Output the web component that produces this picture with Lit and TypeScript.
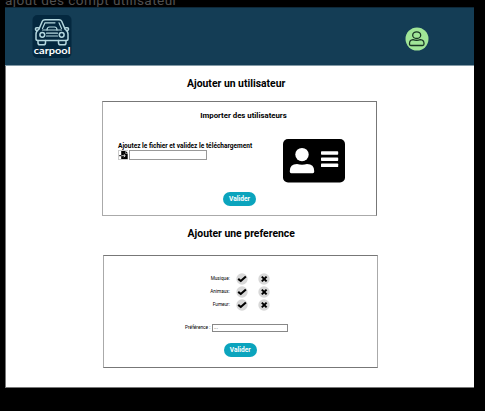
import { LitElement, html, css, svg } from "lit";
import { customElement } from "lit/decorators.js";

const preferences = ["Musique:", "Animaux:", "Fumeur:"];

const logo = html`<svg class="logo" viewBox="0 0 40 43">
  <rect x="0.5" y="0" width="39" height="43" rx="5" fill="#04283f" />
  <g fill="none" stroke="#b5d8df" stroke-width="1.5" stroke-linejoin="round" stroke-linecap="round">
    <path d="M7 14 L10.3 6.3 Q11 4.8 13 4.8 H27 Q29 4.8 29.7 6.3 L33 14" />
    <path d="M10.5 13.5 L13 7.8 H23 M27 7.8 L29.5 13.5 M10.5 15 H29.5" stroke-width="1.2" />
    <path d="M7 14 Q4 16 4 19 V24 Q4 25.5 6 25.5 H34 Q36 25.5 36 24 V19 Q36 16 33 14" />
    <path d="M6.3 12.7 H4.8 Q3.4 12.7 3.4 14 T4.9 15.7 H5.7 M33.7 12.7 H35.2 Q36.6 12.7 36.6 14 T35.1 15.7 H34.3" />
    <circle cx="10.3" cy="19.8" r="2.4" />
    <circle cx="29.7" cy="19.8" r="2.4" />
    <path d="M14.5 18.2 H25.5 M14.5 21 H25.5 M15 15 Q15 12 17.5 12 H22.5 Q25 12 25 15" stroke-width="1.2" />
    <path d="M6 25.5 V28 Q6 29.8 8 29.8 H11.5 Q13.5 29.8 13.5 28 V25.5 M26.5 25.5 V28 Q26.5 29.8 28.5 29.8 H32 Q34 29.8 34 28 V25.5" />
  </g>
  <text x="1.8" y="39.2" textLength="36.6" lengthAdjust="spacingAndGlyphs" fill="#fff">carpool</text>
</svg>`;

const avatar = html`<svg class="avatar" viewBox="0 0 24 24">
  <circle cx="12" cy="12" r="11.5" fill="#a0e597" />
  <g fill="none" stroke="#183524" stroke-width="1.3">
    <ellipse cx="11.7" cy="8.2" rx="4" ry="3.3" />
    <path d="M8 12.7 Q11.7 14.2 15.4 12.7 Q19 13 19 16.5 V17 Q19 18.5 17.5 18.5 H6 Q4.5 18.5 4.5 17 V16.5 Q4.5 13 8 12.7 Z" />
  </g>
</svg>`;

const card = html`<svg class="card" viewBox="0 0 62 43.5">
  <rect width="62" height="43.5" rx="5" />
  <g fill="#fff">
    <circle cx="19" cy="15.6" r="6.7" />
    <path d="M14 25 Q19 26.5 24 25 Q31.2 25.2 31.2 32 V32.8 Q31.2 34.2 29.8 34.2 H8.2 Q6.8 34.2 6.8 32.8 V32 Q6.8 25.2 14 25 Z" />
    <rect x="38" y="12.2" width="17.2" height="3.5" rx="0.7" />
    <rect x="38" y="18.4" width="17.2" height="3.5" rx="0.7" />
    <rect x="38" y="24.6" width="17.2" height="3.5" rx="0.7" />
  </g>
</svg>`;

const fileIcon = html`<svg class="file" viewBox="0 0 9 8">
  <path d="M2.2 0 H6.3 V2.4 H8.7 V8 H2.2 Z M6.7 0 L8.7 2.1 H6.7 Z" />
  <path d="M2.4 4.7 H6 M4.8 3.3 L6.3 4.7 L4.8 6.1" fill="none" stroke="#fff" stroke-width="0.8" />
  <path d="M0.2 4.7 H2.2" stroke="#000" stroke-width="1" />
</svg>`;

const mark = (shape: unknown) => html`<svg class="mark" viewBox="0 0 12 12">
  <circle cx="6" cy="6" r="5.7" fill="#d8d8d8" />
  ${shape}
</svg>`;
const check = svg`<path d="M2.2 5.9 L4.8 8 L9.9 3.5" fill="none" stroke="#000" stroke-width="2.1" />`;
const cross = svg`<path d="M3.8 3.6 L8.6 8.4 M8.6 3.6 L3.8 8.4" fill="none" stroke="#000" stroke-width="2" />`;

@customElement("app-root")
export class AppRoot extends LitElement {
  static styles = css`
    :host {
      display: block;
      height: 411px;
      overflow: hidden;
      background: #000;
      color: #000;
      font-family: Roboto, sans-serif;
    }
    * { box-sizing: border-box; }
    svg { display: block; flex: none; }
    .caption {
      height: 7px;
      padding-left: 5px;
      display: flex;
      align-items: flex-end;
      font-size: 13.6px;
      line-height: 14px;
      letter-spacing: 0.42px;
      color: #505050;
      white-space: nowrap;
    }
    .caption span { margin-bottom: 0; }
    .frame {
      width: 469px;
      height: 381px;
      margin-left: 5px;
      background: #fff;
      border: solid #777;
      border-width: 0 0 1px 1px;
    }
    header {
      position: relative;
      height: 59px;
      margin-left: -1px;
      padding: 8px 45.5px 0 27px;
      display: flex;
      justify-content: space-between;
      background: #143d55;
      border: 1px solid #0e293a;
      border-width: 1px 0;
      border-bottom-color: #839aa6;
    }
    .logo { width: 40px; height: 43px; margin-top: -1px; }
    .logo text { font: 700 9.8px Lato, sans-serif; }
    .avatar { width: 24px; height: 24px; margin-top: 10.5px; }
    main { display: flex; flex-direction: column; }
    h1, h2 { margin: 0; font-weight: 700; white-space: nowrap; }
    h1 { height: 14px; line-height: 14px; font-size: 10.4px; }
    .first { margin: 11px 0 10px 181px; }
    .second { margin: 11px 0 14px 181.6px; }
    h2 { font-size: 7.8px; line-height: 10px; text-align: center; }
    section {
      width: 275px;
      border: 1px solid #777;
      border-left-color: #aaa;
      display: flex;
      flex-direction: column;
    }
    .import { height: 115px; margin-left: 96px; padding: 9px 0 0 15px; border-bottom-color: #aaa; }
    .import h2 { margin-left: -7px; }
    .prefs { height: 113px; margin-left: 97px; padding-top: 16.6px; border-right-color: #aaa; }
    .upload { display: flex; gap: 31px; height: 43.5px; margin-top: 18px; }
    .picker { width: 134px; }
    .label { margin-top: 3px; font-size: 6.54px; line-height: 8px; font-weight: 700; white-space: nowrap; }
    .row { display: flex; gap: 1px; }
    .file { width: 10px; height: 10px; border: 1px solid #ccc; border-width: 1px 0 1px 1px; }
    .field { border: 1px solid #888; font-size: 5px; line-height: 5px; padding-left: 1px; }
    .picker .field { width: 78px; height: 10px; border-color: #999; }
    .card { width: 62px; height: 43.5px; }
    button {
      width: 32.5px;
      height: 14px;
      flex: none;
      padding: 0;
      border: 0;
      border-radius: 7px;
      background: #0ba4bd;
      color: #fff;
      font: 700 6.6px/14px Roboto, sans-serif;
    }
    .import button { margin: 9px 0 0 105.3px; }
    .prefs button { margin: 11px 0 0 120px; }
    .option { display: flex; align-items: center; height: 12.8px; font-size: 4.7px; }
    .option span { width: 125.8px; margin-right: 6.2px; text-align: right; }
    .mark { width: 12px; height: 12px; }
    .mark + .mark { margin-left: 10.3px; }
    .choice { display: flex; align-items: center; margin: 13px 0 0 81px; font-size: 4.8px; height: 8px; white-space: nowrap; }
    .choice span { width: 27px; }
    .choice .field { width: 76px; height: 8px; }
  `;

  render() {
    return html`
      <div class="caption"><span>ajout des compt utilisateur</span></div>
      <div class="frame">
        <header>${logo}${avatar}</header>
        <main>
          <h1 class="first">Ajouter un utilisateur</h1>
          <section class="import">
            <h2>Importer des utilisateurs</h2>
            <div class="upload">
              <div class="picker">
                <div class="label">Ajoutez le fichier et validez le téléchargement</div>
                <div class="row">${fileIcon}<div class="field"></div></div>
              </div>
              ${card}
            </div>
            <button>Valider</button>
          </section>
          <h1 class="second">Ajouter une preference</h1>
          <section class="prefs">
            ${preferences.map(
              (name) => html`<div class="option"><span>${name}</span>${mark(check)}${mark(cross)}</div>`
            )}
            <div class="choice"><span>Préférence :</span><div class="field">...</div></div>
            <button>Valider</button>
          </section>
        </main>
      </div>
    `;
  }
}
